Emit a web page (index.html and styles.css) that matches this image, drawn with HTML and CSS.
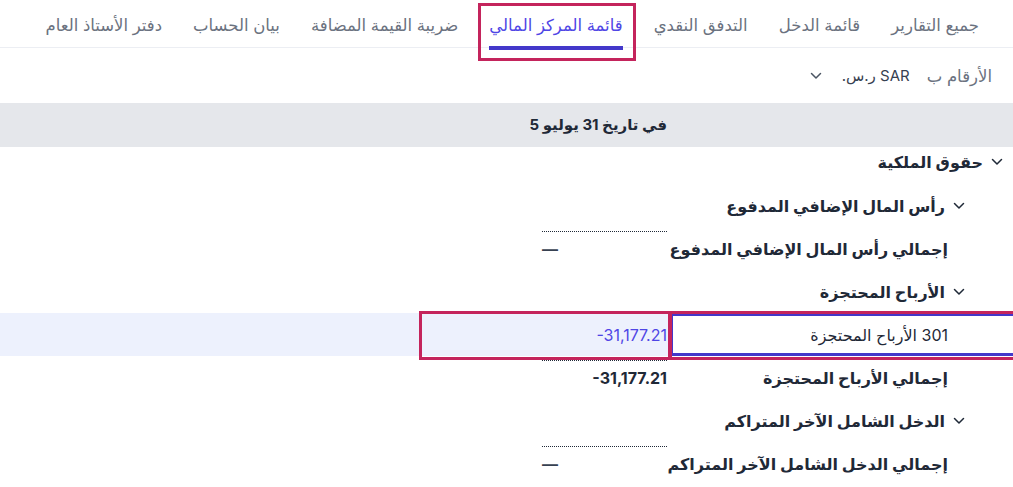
FILE: index.html
```html
<!DOCTYPE html>
<html lang="ar" dir="rtl">
<head>
<meta charset="utf-8">
<title>قائمة المركز المالي</title>
<link rel="stylesheet" href="styles.css">
</head>
<body>
<nav class="tabs">
  <a class="tab">جميع التقارير</a>
  <a class="tab">قائمة الدخل</a>
  <a class="tab">التدفق النقدي</a>
  <a class="tab active">قائمة المركز المالي</a>
  <a class="tab">ضريبة القيمة المضافة</a>
  <a class="tab">بيان الحساب</a>
  <a class="tab">دفتر الأستاذ العام</a>
</nav>

<div class="currency">
  <span class="currency-label">الأرقام ب</span>
  <div class="currency-select">
    <span class="currency-value">SAR ر.س.</span>
    <svg class="chev" width="12" height="8" viewBox="0 0 12 8"><path d="M1.5 1.5l4.5 4.5 4.5-4.5" fill="none" stroke="#4b5563" stroke-width="1.5" stroke-linecap="round" stroke-linejoin="round"/></svg>
  </div>
</div>

<div class="report">
  <div class="head">
    <div class="cell-label"></div>
    <div class="cell-amount head-title">في تاريخ 31 يوليو 5</div>
  </div>

  <div class="row first">
    <div class="cell-label lvl0 group">
      <svg class="chev" width="12" height="8" viewBox="0 0 12 8"><path d="M1.5 1.5l4.5 4.5 4.5-4.5" fill="none" stroke="#1f2937" stroke-width="1.5" stroke-linecap="round" stroke-linejoin="round"/></svg>
      <span>حقوق الملكية</span>
    </div>
    <div class="cell-amount"></div>
  </div>

  <div class="row">
    <div class="cell-label lvl1 group">
      <svg class="chev" width="12" height="8" viewBox="0 0 12 8"><path d="M1.5 1.5l4.5 4.5 4.5-4.5" fill="none" stroke="#1f2937" stroke-width="1.5" stroke-linecap="round" stroke-linejoin="round"/></svg>
      <span>رأس المال الإضافي المدفوع</span>
    </div>
    <div class="cell-amount"></div>
  </div>

  <div class="row total">
    <div class="cell-label lvl2 group">
      <span>إجمالي رأس المال الإضافي المدفوع</span>
    </div>
    <div class="cell-amount"><span class="sum dash">—</span></div>
  </div>

  <div class="row">
    <div class="cell-label lvl1 group">
      <svg class="chev" width="12" height="8" viewBox="0 0 12 8"><path d="M1.5 1.5l4.5 4.5 4.5-4.5" fill="none" stroke="#1f2937" stroke-width="1.5" stroke-linecap="round" stroke-linejoin="round"/></svg>
      <span>الأرباح المحتجزة</span>
    </div>
    <div class="cell-amount"></div>
  </div>

  <div class="row selected-row">
    <div class="cell-label lvl2 account selected">
      <span>301 الأرباح المحتجزة</span>
    </div>
    <div class="cell-amount"><span class="num link">-31,177.21</span></div>
  </div>

  <div class="row total">
    <div class="cell-label lvl2 group">
      <span>إجمالي الأرباح المحتجزة</span>
    </div>
    <div class="cell-amount"><span class="sum"><span class="num">-31,177.21</span></span></div>
  </div>

  <div class="row">
    <div class="cell-label lvl1 group">
      <svg class="chev" width="12" height="8" viewBox="0 0 12 8"><path d="M1.5 1.5l4.5 4.5 4.5-4.5" fill="none" stroke="#1f2937" stroke-width="1.5" stroke-linecap="round" stroke-linejoin="round"/></svg>
      <span>الدخل الشامل الآخر المتراكم</span>
    </div>
    <div class="cell-amount"></div>
  </div>

  <div class="row total">
    <div class="cell-label lvl2 group">
      <span>إجمالي الدخل الشامل الآخر المتراكم</span>
    </div>
    <div class="cell-amount"><span class="sum dash">—</span></div>
  </div>
</div>

<div class="mark mark-tab"></div>
<div class="mark mark-amount"></div>
<div class="mark mark-label"></div>
</body>
</html>
```

FILE: styles.css
```css
* { box-sizing: border-box; }

html, body {
  margin: 0;
  padding: 0;
  background: #ffffff;
}

body {
  width: 1013px;
  height: 487px;
  overflow: hidden;
  position: relative;
  font-family: "Inter", "DejaVu Sans", sans-serif;
  font-size: 16px;
  color: #1f2937;
  direction: rtl;
}

/* Tabs */
.tabs {
  display: flex;
  align-items: stretch;
  gap: 31px;
  height: 48px;
  padding-right: 34px;
  border-bottom: 1px solid #eceef3;
}

.tab {
  display: flex;
  align-items: center;
  padding-top: 3px;
  margin-bottom: -3px;
  border-bottom: 4px solid transparent;
  color: #6b7280;
  font-size: 16.5px;
  white-space: nowrap;
  cursor: pointer;
}

.tab.active {
  color: #4f46e5;
  border-bottom-color: #4338ca;
}

/* Currency row */
.currency {
  display: flex;
  align-items: center;
  gap: 17px;
  height: 55px;
  padding-right: 21px;
}

.currency-label {
  color: #6b7280;
  font-size: 16.5px;
  white-space: nowrap;
}

.currency-select {
  display: flex;
  align-items: center;
  gap: 20px;
}

.currency-value {
  color: #374151;
  font-size: 15px;
  white-space: nowrap;
}

/* Report */
.report {
  display: flex;
  flex-direction: column;
}

.head {
  display: flex;
  height: 44px;
  align-items: center;
  background: #e5e7eb;
}

.head-title {
  font-weight: 700;
  font-size: 15px;
  color: #1f2937;
  white-space: nowrap;
}

.row {
  display: flex;
  height: 43px;
  align-items: center;
}

.row.first {
  height: 37px;
  align-items: flex-start;
  padding-top: 3px;
}

.row.total {
  align-items: flex-start;
  padding-top: 4px;
}

.row.total .cell-label {
  padding-top: 6px;
}

.cell-label {
  width: 343px;
  flex: none;
  display: flex;
  align-items: center;
  gap: 8px;
  line-height: 24px;
  white-space: nowrap;
}

.cell-amount {
  width: 252px;
  flex: none;
  display: flex;
  justify-content: flex-start;
  padding-right: 3px;
  line-height: 24px;
  white-space: nowrap;
}

.group { font-weight: 700; }
.account { font-weight: 400; color: #1f2937; }

.lvl0 { padding-right: 10px; }
.lvl1 { padding-right: 48px; }
.lvl2 { padding-right: 65px; }

.chev { flex: none; }

.num {
  direction: ltr;
  unicode-bidi: isolate;
}

.link {
  color: #4f46e5;
}

.sum {
  width: 125px;
  border-top: 1.5px dotted #1f2937;
  padding-top: 5px;
  display: flex;
  justify-content: flex-start;
  font-weight: 700;
}

.sum.dash {
  justify-content: flex-end;
  color: #374151;
}

.selected-row {
  background: #edf1fd;
}

.selected-row .cell-label.selected {
  height: 100%;
  background: #ffffff;
  border-top: 3px solid #4338ca;
  border-bottom: 3px solid #4338ca;
  border-left: 3px solid #4338ca;
}

/* Annotation marks (overlays) */
.mark {
  position: absolute;
  border: 3px solid #c4245c;
  pointer-events: none;
}

.mark-tab {
  left: 478px;
  top: 3px;
  width: 158px;
  height: 58px;
}

.mark-amount {
  left: 419px;
  top: 311px;
  width: 252px;
  height: 49px;
}

.mark-label {
  left: 669px;
  top: 311px;
  width: 350px;
  height: 49px;
}
```
